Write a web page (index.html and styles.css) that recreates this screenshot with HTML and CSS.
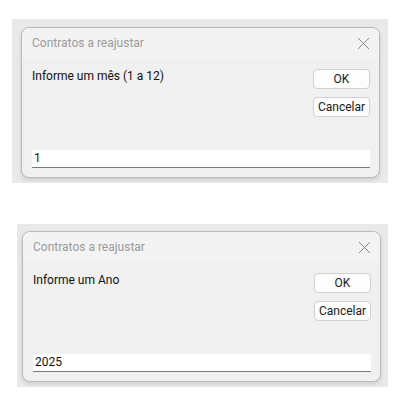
FILE: index.html
```html
<!DOCTYPE html>
<html>
<head>
<meta charset="utf-8">
<link rel="stylesheet" href="styles.css">
</head>
<body>
<div class="shot shot-1">
  <div class="dialog">
    <div class="titlebar">
      <span class="title">Contratos a reajustar</span>
      <svg class="close" width="13" height="13" viewBox="0 0 13 13"><path d="M1 1 L12 12 M12 1 L1 12" stroke="#8a8a8a" stroke-width="1" fill="none"/></svg>
    </div>
    <div class="content">
      <div class="top">
        <div class="label">Informe um mês (1 a 12)</div>
        <div class="buttons">
          <div class="btn">OK</div>
          <div class="btn">Cancelar</div>
        </div>
      </div>
      <div class="input">1</div>
    </div>
  </div>
</div>
<div class="shot shot-2">
  <div class="dialog">
    <div class="titlebar">
      <span class="title">Contratos a reajustar</span>
      <svg class="close" width="13" height="13" viewBox="0 0 13 13"><path d="M1 1 L12 12 M12 1 L1 12" stroke="#8a8a8a" stroke-width="1" fill="none"/></svg>
    </div>
    <div class="content">
      <div class="top">
        <div class="label">Informe um Ano</div>
        <div class="buttons">
          <div class="btn">OK</div>
          <div class="btn">Cancelar</div>
        </div>
      </div>
      <div class="input">2025</div>
    </div>
  </div>
</div>
</body>
</html>
```
FILE: styles.css
```css
html, body {
  margin: 0;
  padding: 0;
  background: #ffffff;
}
body {
  font-family: Roboto, "Noto Sans", sans-serif;
  font-size: 12px;
  color: #111;
  padding-top: 19px;
}
.shot {
  background: #e9e9e9;
  box-sizing: border-box;
}
.shot-1 {
  margin-left: 12px;
  width: 376px;
  height: 164px;
  padding: 8px 0 0 9px;
}
.shot-2 {
  margin-top: 41px;
  margin-left: 17px;
  width: 371px;
  height: 163px;
  padding: 7px 0 0 5px;
}
.dialog {
  width: 359px;
  height: 151px;
  box-sizing: border-box;
  border: 1px solid #b9b9b9;
  border-radius: 8px;
  background: #f0f0f0;
  overflow: hidden;
  box-shadow: 0 2px 4px rgba(0,0,0,0.12);
  display: flex;
  flex-direction: column;
}
.titlebar {
  height: 30px;
  background: #f3f3f3;
  display: flex;
  align-items: center;
  justify-content: space-between;
  padding: 0 9px 0 10px;
  flex-shrink: 0;
}
.title {
  color: #9a9a9a;
  font-size: 12px;
}
.close {
  display: block;
}
.content {
  flex: 1;
  display: flex;
  flex-direction: column;
  justify-content: space-between;
  padding: 10px 9px 9px 10px;
}
.top {
  display: flex;
  justify-content: space-between;
  align-items: flex-start;
}
.label {
  margin-top: 0;
  line-height: 16px;
}
.buttons {
  display: flex;
  flex-direction: column;
  gap: 8px;
  margin-top: 1px;
}
.btn {
  width: 57px;
  height: 20px;
  box-sizing: border-box;
  border: 1px solid #d0d0d0;
  border-radius: 4px;
  background: #fdfdfd;
  display: flex;
  align-items: center;
  justify-content: center;
  line-height: 1;
  color: #1a1a1a;
}
.input {
  height: 18px;
  box-sizing: border-box;
  background: #ffffff;
  border-bottom: 1px solid #7a7a7a;
  padding-left: 2px;
  line-height: 17px;
  width: 338px;
}
```
